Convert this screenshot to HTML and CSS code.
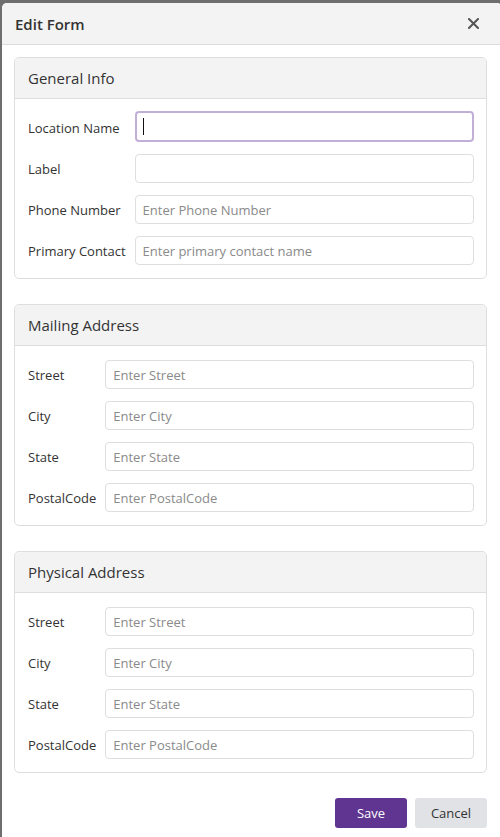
FILE: index.html
```html
<!DOCTYPE html>
<html lang="en">
<head>
	<meta charset="UTF-8">
	<title>Edit Form</title>
	<link rel="stylesheet" href="styles.css">
</head>
<body>
	<div class="modal">
		<div class="modal-hd">
			<h1 class="modal-title">Edit Form</h1>
			<svg class="close" width="11" height="11" viewBox="0 0 11 11"><path d="M1 1L10 10M10 1L1 10" stroke="#555" stroke-width="2" stroke-linecap="square"/></svg>
		</div>
		<div class="modal-bd">
			<div class="panel">
				<div class="panel-hd">General Info</div>
				<div class="panel-bd">
					<label>Location Name</label>
					<div class="field focus"><input type="text"><span class="caret"></span></div>
					<label>Label</label>
					<input type="text">
					<label>Phone Number</label>
					<input type="text" placeholder="Enter Phone Number">
					<label>Primary Contact</label>
					<input type="text" placeholder="Enter primary contact name">
				</div>
			</div>
			<div class="panel">
				<div class="panel-hd">Mailing Address</div>
				<div class="panel-bd">
					<label>Street</label>
					<input type="text" placeholder="Enter Street">
					<label>City</label>
					<input type="text" placeholder="Enter City">
					<label>State</label>
					<input type="text" placeholder="Enter State">
					<label>PostalCode</label>
					<input type="text" placeholder="Enter PostalCode">
				</div>
			</div>
			<div class="panel">
				<div class="panel-hd">Physical Address</div>
				<div class="panel-bd">
					<label>Street</label>
					<input type="text" placeholder="Enter Street">
					<label>City</label>
					<input type="text" placeholder="Enter City">
					<label>State</label>
					<input type="text" placeholder="Enter State">
					<label>PostalCode</label>
					<input type="text" placeholder="Enter PostalCode">
				</div>
			</div>
			<div class="actions">
				<button class="btn btn-save">Save</button>
				<button class="btn btn-cancel">Cancel</button>
			</div>
		</div>
	</div>
</body>
</html>
```

FILE: styles.css
```css
*{box-sizing: border-box;}
html,body{margin:0;padding:0;}
body{
	background:#6e6e6e;
	font-family:"Open Sans","Noto Sans",sans-serif;
	color:#333;
	overflow:hidden;
	height:837px;
}
.modal{
	margin:3px 0 0 2px;
	width:500px;
	height:840px;
	background:#fff;
	border-radius:5px 5px 0 0;
}
.modal-hd{
	height:42px;
	display:flex;
	align-items:center;
	justify-content:space-between;
	padding:0 23px 0 13px;
	background:#f3f3f3;
	border-bottom:1px solid #dcdcdc;
	border-radius:5px 5px 0 0;
}
.modal-title{
	margin:0;
	font-size:15px;
	font-weight:600;
	color:#333;
}
.close{display:block;}
.modal-bd{
	padding:12px 15px 0 12px;
}
.panel{
	border:1px solid #dedede;
	border-radius:5px;
	margin-bottom:25px;
}
.panel-hd{
	height:41px;
	line-height:40px;
	padding:0 13px;
	font-size:15px;
	background:#f3f3f3;
	border-bottom:1px solid #dedede;
	border-radius:5px 5px 0 0;
}
.panel-bd{
	display:grid;
	grid-template-columns:auto 1fr;
	column-gap:9px;
	row-gap:12px;
	align-items:center;
	padding:14px 12px 13px 13px;
}
.panel-bd label{
	font-size:13px;
	color:#333;
}
.panel-bd input{
	height:29px;
	width:100%;
	border:1px solid #dedede;
	border-radius:4px;
	padding:0 7px;
	font-family:inherit;
	font-size:13px;
	color:#333;
	outline:none;
}
.panel-bd input::placeholder{color:#8a8a8a;}
.field{position:relative;}
.field.focus{margin-top:-2px;}
.field.focus input{
	height:31px;
	border:2px solid #c2afd8;
	padding:0 6px;
}
.caret{
	position:absolute;
	left:8px;
	top:7px;
	width:1px;
	height:17px;
	background:#111;
}
.actions{
	display:flex;
	justify-content:flex-end;
	gap:8px;
}
.btn{
	width:72px;
	height:30px;
	border:0;
	border-radius:3px;
	font-family:inherit;
	font-size:13px;
}
.btn-save{background:#5f3591;color:#fff;}
.btn-cancel{background:#e0e2e6;color:#333;}
```
